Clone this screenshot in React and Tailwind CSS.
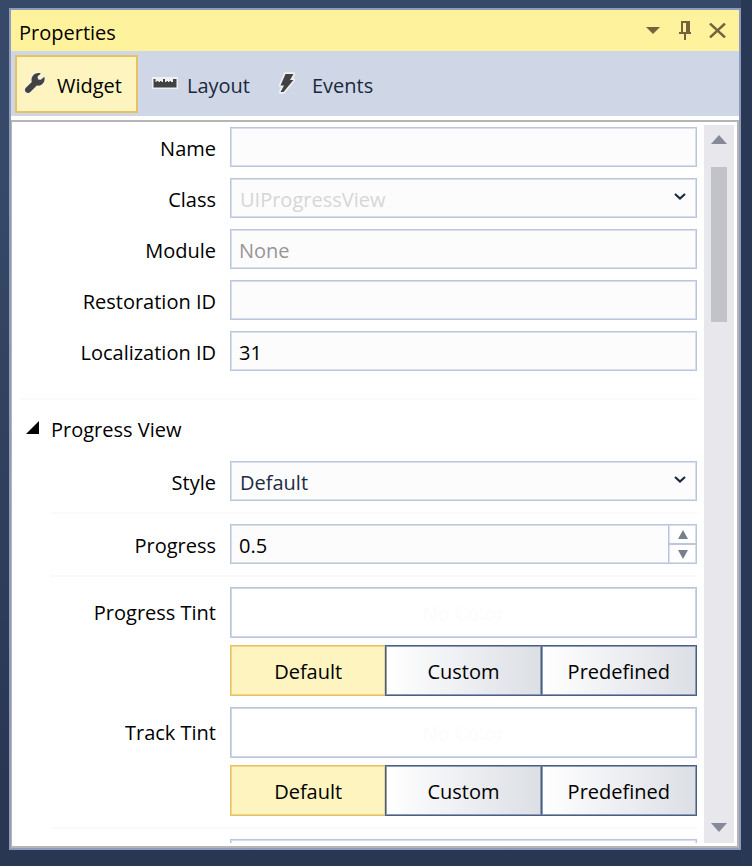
import React from "react";

const field =
  "block w-full rounded-none border border-[#bcc6da] bg-[#fcfcfc] px-2 shadow-[inset_0_0_0_1px_#d8deeb] outline-none";

function Row({ label, id, children }) {
  return (
    <div className="grid grid-cols-[204px_minmax(0,1fr)] items-center gap-x-[14px]">
      <label htmlFor={id} className="pt-1 text-right leading-9">
        {label}
      </label>
      {children}
    </div>
  );
}

function TextRow({ label, id, value, placeholder }) {
  return (
    <Row label={label} id={id}>
      <input
        id={id}
        type="text"
        defaultValue={value}
        placeholder={placeholder}
        className={`${field} h-10 pt-[2px] placeholder:text-[#969696]`}
      />
    </Row>
  );
}

function SelectRow({ label, id, value, disabled }) {
  return (
    <Row label={label} id={id}>
      <div className="relative">
        <select
          id={id}
          disabled={disabled}
          defaultValue={value}
          className={`${field} h-10 appearance-none pt-1 pl-[9px] text-[#1e2b45] opacity-100 disabled:text-[#d6d6d6]`}
        >
          <option>{value}</option>
        </select>
        <svg className="pointer-events-none absolute top-[15px] right-[11px] h-2 w-3" viewBox="0 0 12 8" aria-hidden="true">
          <path d="M1 1L6 5.5L11 1" fill="none" stroke="#1b293e" strokeWidth="2.2" />
        </svg>
      </div>
    </Row>
  );
}

function Separator({ inset }) {
  return <div className={inset ? "-mb-px ml-[38px] h-[2px] bg-[#fafafa]" : "ml-2 h-[2px] bg-[#fafafa]"} />;
}

function TintRows({ label, id }) {
  const plain =
    "-ml-px flex-1 border border-[#4b5f84] bg-linear-to-r from-white to-[#dcdfe5] pt-[2px] shadow-[inset_0_0_0_1px_#8e9bb5]";
  return (
    <div className="grid grid-cols-[204px_minmax(0,1fr)] gap-x-[14px] gap-y-[7px]">
      <label htmlFor={id} className="text-right leading-[51px]">
        {label}
      </label>
      <input
        id={id}
        type="text"
        readOnly
        placeholder="No Color"
        className="block h-[51px] w-full border border-[#bcc6da] bg-white pt-[2px] text-center shadow-[inset_0_0_0_1px_#cdd5e4] outline-none placeholder:text-[#fcfcfc]"
      />
      <div className="col-start-2 flex h-[51px]">
        <button type="button" aria-pressed="true" className="flex-1 border border-[#e5c365] bg-[#fdf4bf] pt-[2px] shadow-[inset_0_0_0_1px_#efd68a]">
          Default
        </button>
        <button type="button" className={plain}>Custom</button>
        <button type="button" className={plain}>Predefined</button>
      </div>
    </div>
  );
}

function Wrench() {
  return (
    <svg className="h-6 w-6" viewBox="0 0 24 24" aria-hidden="true">
      <path
        d="M21.300 5.800C22.800 10.800 18.800 15.600 13.800 14.600L7.300 21C6 22.200 4 22.200 2.800 21C1.600 19.800 1.700 18 2.900 16.800L8.800 11C7.300 5.500 12 0.800 17.800 2.400L14.600 5.600L15 8.400L17.900 8.800Z"
        fill="#424242" stroke="#f4f1e2" strokeWidth="2.500" paintOrder="stroke" strokeLinejoin="round"
      />
    </svg>
  );
}

function Ruler() {
  return (
    <svg className="h-3 w-[26px]" viewBox="0 0 26 12" aria-hidden="true">
      <rect width="26" height="12" fill="#eff0f3" />
      <path d="M1.500 2H3.500V5H4.500V4H6.500V5H8V4H9.500V5H11V2H13V5H14.500V4H16V5H17.500V4H19V5H21V2H24.500V10.500H1.500Z" fill="#424242" />
    </svg>
  );
}

function Bolt() {
  return (
    <svg className="h-[22px] w-[18px]" viewBox="0 0 18 22" aria-hidden="true">
      <path
        d="M7.500 2H15.500L12 8H15.500L5.500 20H2.500L6 13.500H2.500Z"
        fill="#424242" stroke="#eff0f3" strokeWidth="3.500" paintOrder="stroke" strokeLinejoin="round"
      />
    </svg>
  );
}

export default function App() {
  return (
    <div className="flex h-screen bg-linear-to-b from-[#364968] from-20% to-[#293753] to-90% font-['Open_Sans','Noto_Sans',sans-serif] text-[20px] leading-7 text-black">
      <main className="mt-2 mb-4 ml-[9px] flex min-w-0 flex-1 flex-col border-2 border-[#8e9bbc] bg-white">
        <header className="flex h-[41px] shrink-0 items-center justify-between bg-[#fff29d] pr-3 pl-2">
          <h1 className="pt-1">Properties</h1>
          <div className="flex items-center gap-3">
            <button type="button" aria-label="Window options" className="flex h-5 w-5 items-center justify-center">
              <svg className="h-[7px] w-[14px]" viewBox="0 0 14 7"><path d="M0 0H14L7 7Z" fill="#75633d" /></svg>
            </button>
            <button type="button" aria-label="Pin" className="flex h-5 w-5 items-center justify-center">
              <svg className="h-[19px] w-3" viewBox="0 0 12 19">
                <path d="M2 0H11V11H12V13H7V19H5V13H0V11H2ZM4 2V11H7V2Z" fill="#75633d" fillRule="evenodd" />
              </svg>
            </button>
            <button type="button" aria-label="Close" className="flex h-5 w-5 items-center justify-center">
              <svg className="h-[15px] w-[17px]" viewBox="0 0 17 15"><path d="M1 0.500L16 14.500M16 0.500L1 14.500" stroke="#75633d" strokeWidth="2.400" /></svg>
            </button>
          </div>
        </header>
        <nav className="flex h-[65px] shrink-0 gap-[14px] bg-[#cfd6e5] px-1 pt-1 pb-[3px] text-[#1b293e]">
          <button type="button" className="flex w-[123px] items-center gap-[10px] border-2 border-[#e5c365] bg-[#fdf4bf] pt-1 pl-[6px] text-black">
            <span className="mb-[6px]"><Wrench /></span>
            Widget
          </button>
          <button type="button" className="flex items-center gap-[9px] pt-1">
            <span className="mb-[6px]"><Ruler /></span>
            Layout
          </button>
          <button type="button" className="ml-[14px] flex items-center gap-4 pt-1">
            <span className="mb-[6px]"><Bolt /></span>
            Events
          </button>
        </nav>
        <section className="mt-1 flex min-h-0 flex-1 border-2 border-l border-[#b5b5b5] py-[3px] pr-[3px]">
          <form className="mr-[7px] min-w-0 flex-1 overflow-hidden">
            <div className="flex flex-col gap-[11px] pt-[2px]">
              <TextRow label="Name" id="name" />
              <SelectRow label="Class" id="class" value="UIProgressView" disabled />
              <TextRow label="Module" id="module" placeholder="None" />
              <TextRow label="Restoration ID" id="restoration" />
              <TextRow label="Localization ID" id="localization" value="31" />
            </div>
            <div className="pt-[27px]"><Separator /></div>
            <button type="button" aria-expanded="true" className="flex h-[61px] items-center gap-3 pb-[2px] pl-[14px]">
              <svg className="mb-1 h-[13px] w-[13px]" viewBox="0 0 13 13" aria-hidden="true"><path d="M13 0V13H0Z" fill="#000" /></svg>
              Progress View
            </button>
            <div className="flex flex-col gap-[11px]">
              <SelectRow label="Style" id="style" value="Default" />
              <Separator inset />
              <Row label="Progress" id="progress">
                <div className="flex h-10 border border-[#bcc6da] bg-[#fcfcfc] shadow-[inset_0_0_0_1px_#d8deeb]">
                  <input id="progress" type="text" inputMode="decimal" defaultValue="0.5" className="min-w-0 flex-1 bg-transparent px-2 pt-1 outline-none" />
                  <div className="flex w-7 flex-col divide-y-2 divide-[#bcc6da] border-l border-[#bcc6da] bg-white shadow-[inset_0_0_0_1px_#d8deeb]">
                    <button type="button" aria-label="Increase" className="flex flex-1 items-center justify-center">
                      <svg className="h-[9px] w-[10px]" viewBox="0 0 10 9"><path d="M5 0L10 9H0Z" fill="#777f8f" /></svg>
                    </button>
                    <button type="button" aria-label="Decrease" className="flex flex-1 items-center justify-center">
                      <svg className="h-[9px] w-[10px]" viewBox="0 0 10 9"><path d="M0 0H10L5 9Z" fill="#777f8f" /></svg>
                    </button>
                  </div>
                </div>
              </Row>
              <Separator inset />
              <TintRows label="Progress Tint" id="progress-tint" />
              <TintRows label="Track Tint" id="track-tint" />
              <Separator inset />
              <SelectRow label="" id="next" value="" />
            </div>
          </form>
          <div className="flex w-[30px] flex-col items-center bg-[#e8e8ec] pt-[10px] pb-[11px]">
            <button type="button" aria-label="Scroll up">
              <svg className="block h-[9px] w-4" viewBox="0 0 16 9"><path d="M8 0L16 9H0Z" fill="#868999" /></svg>
            </button>
            <div className="mt-[23px] mb-auto h-[155px] w-4 bg-[#c2c3c9]" />
            <button type="button" aria-label="Scroll down">
              <svg className="block h-[9px] w-4" viewBox="0 0 16 9"><path d="M0 0H16L8 9Z" fill="#868999" /></svg>
            </button>
          </div>
        </section>
      </main>
      <div className="w-[11px] bg-[#293855]" />
    </div>
  );
}
